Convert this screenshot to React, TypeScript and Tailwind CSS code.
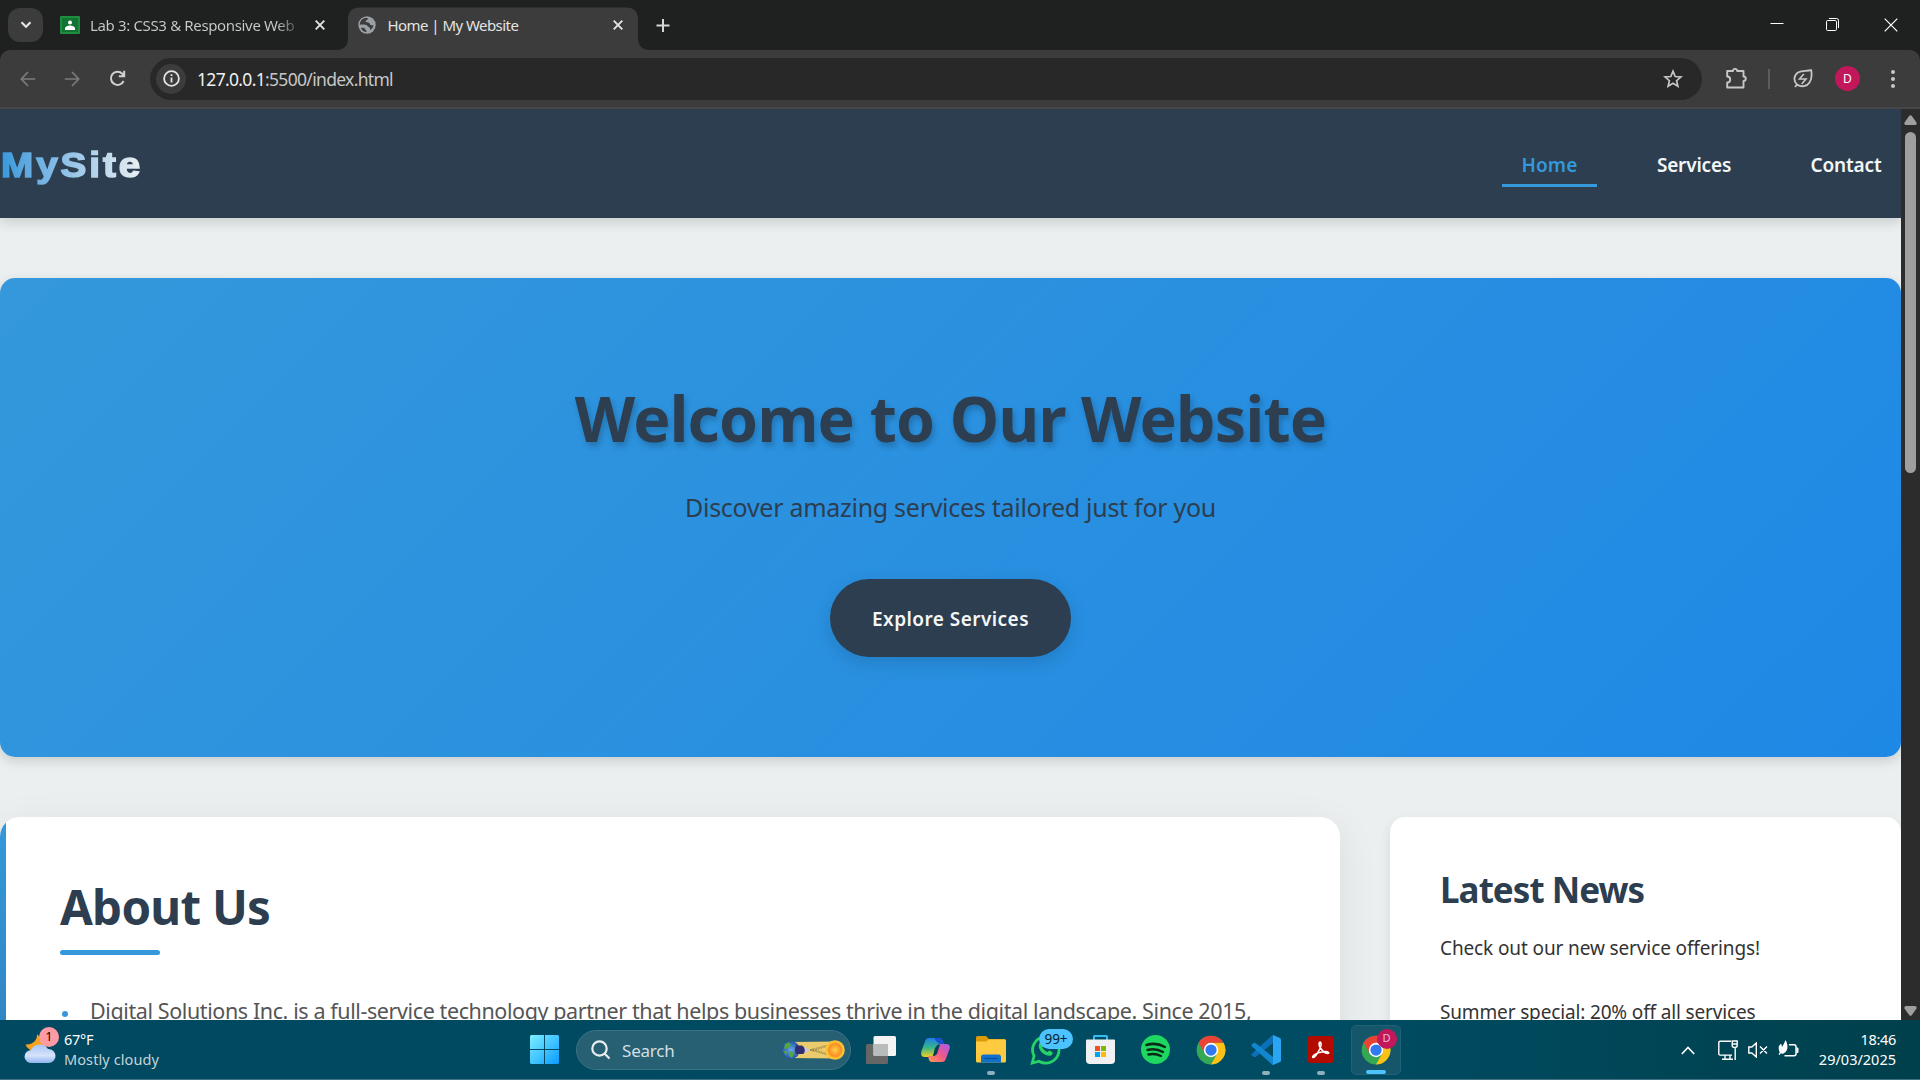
import React from 'react';

const Chrome = ({ size = 30 }: { size?: number }) => (
  <svg width={size} height={size} viewBox="0 0 48 48">
    <circle cx="24" cy="24" r="23" fill="#34a853" />
    <path d="M24 12.500H44 A23 23 0 0 1 24 47 L34 29.700 Z" fill="#fbc116" />
    <path d="M4.100 12.500 A23 23 0 0 1 43.900 12.500 H24 L14 18.300 L12.500 27 Z" fill="#ea4335" />
    <circle cx="24" cy="24" r="11.500" fill="#fff" />
    <circle cx="24" cy="24" r="9" fill="#3079f0" />
  </svg>
);

const Close = () => (
  <svg width="10" height="10" viewBox="0 0 10 10" stroke="#e3e3e3" strokeWidth="1.9" fill="none">
    <path d="M.7.7l8.600 8.600M9.300.7L.7 9.300" />
  </svg>
);

function TabStrip() {
  return (
    <div className="flex h-[50px] bg-[#1f2120] pl-2">
      <div className="mt-2 flex h-[34px] w-[35px] items-center justify-center rounded-xl bg-[#3c3c3c]">
        <svg width="12" height="8" viewBox="0 0 12 8" fill="none" stroke="#e3e3e3" strokeWidth="2.200"><path d="M1.500 1.300L6 5.800l4.500-4.500" /></svg>
      </div>
      <div className="ml-[17px] flex h-[50px] w-[267px] items-center">
        <svg width="20" height="18" viewBox="0 0 20 18">
          <rect width="20" height="18" rx="1" fill="#1e8e3e" />
          <rect x="2" y="2" width="16" height="14" fill="#137333" />
          <circle cx="10" cy="6.500" r="2" fill="#fff" />
          <path d="M5 14v-1.500c0-2 3-3 5-3s5 1 5 3V14z" fill="#fff" />
        </svg>
        <span className="ml-2.5 w-[207px] overflow-hidden bg-linear-to-r from-[#c9cac9] from-90% to-[#4a4b4a] bg-clip-text text-[15px] tracking-[-0.35px] whitespace-nowrap text-transparent">Lab 3: CSS3 &amp; Responsive Web</span>
        <span className="ml-[18px]"><Close /></span>
      </div>
      <div className="relative ml-[21px] flex h-[50px] w-[290px] items-center">
        <svg className="absolute top-0 -left-3" width="314" height="50" viewBox="0 0 314 50">
          <path d="M0 50Q12 50 12 38V19.500Q12 7.500 24 7.500H290Q302 7.500 302 19.500V38Q302 50 314 50Z" fill="#3c3c3c" />
        </svg>
        <svg className="relative ml-[10px]" width="18" height="18" viewBox="0 0 18 18">
          <circle cx="9" cy="9" r="8.700" fill="#9aa0a6" />
          <path d="M8.500 1.800c2 .3 1.500 2.200 0 2.400-1.500.2-1 2 .5 2 2 0 2.800 1 3 2 .3 1.300 2 .6 3.500 1.300-.5 2-2 3.800-3.500 4.500.5-2-.3-2.500-1.300-3C9 10.200 9.500 9 7.500 8.800 5 8.500 3 8.400 1.800 9 1.800 5 4.500 2 8.500 1.800zM3 12c1.500-.3 3.500-.2 4 1 .3 1 1.800 1 1.500 3C6 16 4 14.500 3 12z" fill="#3c3c3c" />
        </svg>
        <span className="relative ml-[11.500px] w-[225px] text-[15px] tracking-[-0.55px] whitespace-nowrap text-[#e3e3e3]">Home | My Website</span>
        <span className="relative"><Close /></span>
      </div>
      <svg className="mt-[19px] ml-[18px]" width="14" height="13" viewBox="0 0 14 13" stroke="#d6d6d6" strokeWidth="2"><path d="M7 0v13M.5 6.500h13" /></svg>
      <div className="ml-auto flex pr-[22px] text-white">
        <svg className="mt-[17px]" width="14" height="14" viewBox="0 0 14 14" stroke="#fff" strokeWidth="1"><path d="M.5 6.500h13" /></svg>
        <svg className="mt-[18px] ml-[42px]" width="14" height="14" viewBox="0 0 14 14" stroke="#fff" fill="none"><rect x=".5" y="2.500" width="10" height="10" rx="1.200" /><path d="M3 .5h7.500a2 2 0 0 1 2 2V10" /></svg>
        <svg className="mt-[18px] ml-[44px]" width="14" height="14" viewBox="0 0 14 14" stroke="#fff" strokeWidth="1.200"><path d="M.7.7l12.600 12.600M13.300.7L.7 13.300" /></svg>
      </div>
    </div>
  );
}

function Toolbar() {
  return (
    <div className="bg-[#1f2120]">
      <div className="flex h-[59px] items-center rounded-t-[10px] border-b-2 border-[#474747] bg-[#3c3c3c] pt-px pb-px pl-[20px]">
        <svg width="16" height="16" viewBox="0 0 16 16" fill="none" stroke="#7b7b7b" strokeWidth="1.700"><path d="M15.200 8H1.500M8 1L1.300 8 8 15" /></svg>
        <svg className="ml-[28px]" width="16" height="16" viewBox="0 0 16 16" fill="none" stroke="#7b7b7b" strokeWidth="1.700"><path d="M.8 8h13.700M8 1l6.700 7L8 15" /></svg>
        <svg className="ml-[29px]" width="17" height="17" viewBox="0 0 17 17" fill="none" stroke="#d0d0d0" strokeWidth="2"><path d="M14.600 11A6.600 6.600 0 1 1 13.300 3.700L15 5.500M15.200.8v5.400H9.800" /></svg>
        <div className="ml-[24px] flex h-[42px] w-[1552px] items-center rounded-full bg-[#282828] pl-1.5">
          <div className="flex size-[30px] items-center justify-center rounded-full bg-[#3c3c3c]">
            <svg width="17" height="17" viewBox="0 0 17 17" fill="none" stroke="#e3e3e3" strokeWidth="1.800"><circle cx="8.500" cy="8.500" r="7.400" /><path d="M8.500 7.500v5M8.500 4.200v1.900" /></svg>
          </div>
          <span className="ml-[11px] pt-px text-[17.500px] tracking-[-0.68px] text-[#c7c7c7]"><span className="text-[#f0f0f0]">127.0.0.1</span>:5500/index.html</span>
          <svg className="mr-[19px] ml-auto" width="20" height="20" viewBox="0 0 20 20" fill="none" stroke="#c7c7c7" strokeWidth="1.700"><path d="M10 2.200l2.200 5.300 5.700.5-4.300 3.700 1.300 5.600-4.900-3-4.900 3 1.300-5.600L2.100 8l5.700-.5z" /></svg>
        </div>
        <svg className="ml-[24px]" width="21" height="21" viewBox="0 0 21 21" fill="none" stroke="#c7c7c7" strokeWidth="1.900" strokeLinejoin="round"><path d="M1.200 3H7a2.100 2.100 0 0 1 4.200 0H17.500V8.500a2.200 2.200 0 0 1 0 4.500V19.500H1.200V14.500c4 0 4-6 0-6z" /></svg>
        <div className="ml-[21px] h-5 w-0.5 bg-[#5d5d5d]" />
        <svg className="ml-[23px]" width="20" height="20" viewBox="0 0 20 20" fill="none" stroke="#c7c7c7" strokeWidth="1.800"><path d="M2 18l2-2.500C-.5 11 1.500 5.500 5.500 3.300 9 1.300 13 2.300 18.200 1.200c.7 4 .5 9-1.700 12.300-2.500 4-8 5-12.500 2" /><path d="M10.800 5L6.500 10h6.500l-4.300 5" strokeWidth="1.600" /></svg>
        <div className="ml-[22px] flex size-[25px] items-center justify-center rounded-full bg-[#c2185b] text-[12px] text-white">D</div>
        <svg className="ml-[31px]" width="4" height="18" viewBox="0 0 4 18" fill="#c7c7c7"><circle cx="2" cy="2" r="2" /><circle cx="2" cy="9" r="2" /><circle cx="2" cy="16" r="2" /></svg>
      </div>
    </div>
  );
}

function Page() {
  return (
    <div className="h-[911px] w-[1901px] overflow-hidden bg-[#ebeff0]">
      <header className="relative flex h-[109px] items-center justify-between bg-[#2c3e50] shadow-[0_4px_12px_rgba(0,0,0,0.15)]">
        <div className="origin-left scale-x-110 bg-linear-to-r from-[#3498db] to-[#ecf0f1] bg-clip-text pt-[3px] pl-px font-['Liberation_Sans'] text-[35.200px] font-black tracking-[2.600px] text-transparent [-webkit-text-stroke:1.600px_transparent]">MySite</div>
        <nav className="flex gap-10 pt-0.5 text-[19px] font-semibold text-[#f4f6f7]">
          <div className="flex h-[45px] w-[95px] justify-center border-b-[3px] border-[#3498db] pt-[9px] tracking-[0.1px] text-[#3498db]">Home</div>
          <div className="flex w-[114px] justify-center pt-[9px] tracking-[-0.18px]">Services</div>
          <div className="flex w-[110px] justify-center pt-[9px] tracking-[-0.15px]">Contact</div>
        </nav>
      </header>
      <section className="mt-[60px] flex h-[479px] flex-col items-center rounded-[15px] bg-linear-135 from-[#3498db] to-[#1e88e5] pt-[98px] shadow-[0_4px_12px_rgba(0,0,0,0.15)]">
        <h1 className="text-[62.500px] leading-[84px] font-bold tracking-[-0.75px] text-[#2c3e50] [text-shadow:2px_4px_6px_rgba(0,0,0,0.22)]">Welcome to Our Website</h1>
        <p className="mt-[29px] text-[25px] leading-[36px] tracking-[-0.28px] text-[#2c3e50]">Discover amazing services tailored just for you</p>
        <div className="mt-[54px] flex h-[78px] w-[241px] items-center justify-center rounded-full bg-[#2c3e50] pt-0.5 text-[19px] font-semibold tracking-[0.450px] text-[#f4f6f7] shadow-[0_6px_18px_rgba(0,0,0,0.13)]">Explore Services</div>
      </section>
      <div className="mt-[60px] flex gap-[50px]">
        <article className="relative h-[500px] w-[1340px] rounded-[20px] bg-white shadow-[0_10px_40px_rgba(0,0,0,0.08)]">
          <div className="absolute inset-0 overflow-hidden rounded-[20px]"><div className="h-full w-1.5 bg-linear-to-b from-[#3498db] to-[#2c6ea6]" /></div>
          <div className="relative px-[60px] pt-[57px]">
            <h2 className="text-[47.500px] leading-[66px] font-bold tracking-[-0.75px] text-[#2c3e50]">About Us</h2>
            <div className="mt-[10px] h-[5px] w-[100px] rounded-[3px] bg-[#3498db]" />
            <div className="mt-[36px] flex items-center">
              <div className="mt-[5px] ml-0.5 size-1.5 shrink-0 rounded-full bg-[#3498db]" />
              <p className="ml-[22px] text-[21.500px] leading-[40px] tracking-[-0.400px] whitespace-nowrap text-[#555]">Digital Solutions Inc. is a full-service technology partner that helps businesses thrive in the digital landscape. Since 2015,</p>
            </div>
          </div>
        </article>
        <aside className="h-[500px] w-[511px] rounded-[15px] bg-white px-[50px] pt-[48px] shadow-[0_4px_12px_rgba(0,0,0,0.09)]">
          <h3 className="text-[35px] leading-[50px] font-bold tracking-[-0.950px] text-[#2c3e50]">Latest News</h3>
          <p className="mt-[17px] text-[19px] leading-[32px] tracking-[-0.120px] text-[#333]">Check out our new service offerings!</p>
          <p className="mt-[32px] text-[19px] leading-[32px] tracking-[-0.150px] text-[#333]">Summer special: 20% off all services</p>
        </aside>
      </div>
    </div>
  );
}

function Scrollbar() {
  return (
    <div className="flex h-[911px] w-[19px] flex-col items-center bg-[#2c2c2c] pt-1.5">
      <svg width="13" height="10" viewBox="0 0 13 10" fill="#9f9f9f"><path d="M5.300.8Q6.500-.5 7.700.8L12.500 7.500Q13 10 11 10H2Q0 10 .5 7.500z" /></svg>
      <div className="mt-[7px] h-[341px] w-[11px] rounded-full bg-[#9f9f9f]" />
      <svg className="mt-auto mb-1" width="13" height="10" viewBox="0 0 13 10" fill="#9f9f9f"><path d="M5.300 9.200Q6.500 10.500 7.700 9.200L12.500 2.500Q13 0 11 0H2Q0 0 .5 2.500z" /></svg>
    </div>
  );
}

const Dot = () => <div className="absolute bottom-[5px] left-1/2 h-1 w-2 -translate-x-1/2 rounded-full bg-[#8fb0bb]" />;

const Slot = ({ children, dot = false }: { children: React.ReactNode; dot?: boolean }) => (
  <div className="relative flex h-[60px] w-[55px] items-center justify-center">{children}{dot && <Dot />}</div>
);

function Taskbar() {
  return (
    <div className="flex h-[60px] border-b border-[#3f7182] bg-linear-to-r from-[#004960] via-[#004c63] via-70% to-[#00404c] text-white">
      <div className="flex w-[517px] pl-[24px]">
        <div className="relative mt-[7px] h-[38px] w-[36px]">
          <svg width="36" height="38" viewBox="0 0 36 38">
            <defs><linearGradient id="cl" x1="0" x2="0" y1="0" y2="1"><stop offset="0" stopColor="#a9c4f5" /><stop offset=".6" stopColor="#d5e3fb" /><stop offset="1" stopColor="#8fb2f0" /></linearGradient></defs>
            <path d="M13 7c3 4 5 5 9 5v12H8C5 22 2 20 1.500 17.500c7 .5 12-4 11.500-10.500z" fill="#f5a31c" />
            <path d="M8 36a7 6.500 0 0 1-1-13 9.500 9 0 0 1 17-1 7 7 0 0 1 1 14z" fill="url(#cl)" />
          </svg>
          <div className="absolute top-0 left-[15px] flex size-5 items-center justify-center rounded-full bg-[#ff99a4] text-[12px] text-black">1</div>
        </div>
        <div className="ml-[4px] pt-[9px] text-[14.500px] leading-[20px]">
          <div className="tracking-[-0.3px]">67°F</div>
          <div className="tracking-[0.1px] text-[#c4d4d9]">Mostly cloudy</div>
        </div>
      </div>
      <div className="flex items-center">
        <Slot>
          <svg width="29" height="29" viewBox="0 0 29 29">
            <defs><linearGradient id="win" x1="0" y1="0" x2="1" y2="1"><stop offset="0" stopColor="#7df0ff" /><stop offset="1" stopColor="#0a9bff" /></linearGradient></defs>
            <path d="M1 0h13v14H0V1zM15 0h13l1 1v13H15zM0 15h14v14H1l-1-1zM15 15h14v13l-1 1H15z" fill="url(#win)" />
          </svg>
        </Slot>
        <div className="ml-[4px] flex h-10 w-[275px] items-center rounded-full border border-[#3c7285] bg-[#276073] pr-[5px] pl-[14px]">
          <svg width="20" height="20" viewBox="0 0 20 20" fill="none" stroke="#e8eef0" strokeWidth="2.200"><circle cx="8.500" cy="8.500" r="7.200" /><path d="M13.500 13.500l5 5" /></svg>
          <span className="ml-[11px] pt-0.5 text-[17px] tracking-[-0.2px] text-[#d3dfe3]">Search</span>
          <svg className="ml-auto" width="63" height="20" viewBox="0 0 63 20">
            <defs>
              <radialGradient id="sun"><stop offset="0" stopColor="#ffd24a" /><stop offset=".65" stopColor="#f98d23" /><stop offset=".8" stopColor="#ffc02e" /><stop offset="1" stopColor="#f5c542" /></radialGradient>
              <radialGradient id="earth"><stop offset="0" stopColor="#6aa8e8" /><stop offset="1" stopColor="#1d56a8" /></radialGradient>
            </defs>
            <path d="M9 18L54 18.500V1.500L9 2z" fill="#ebcb6c" />
            <circle cx="9" cy="10" r="9" fill="url(#earth)" />
            <path d="M3 4l4-2 2 3-3 3-4 1zM8 11l4 2-2 5-3-2zM1 10l4 2-1 4z" fill="#57a639" />
            <path d="M14 5.500h6l6 4.500-5 4H14q-2-4 0-8.500z" fill="#302e6e" />
            <path d="M21 6l7 4-6 3.500q2-4-1-7.500z" fill="#c9c6d8" />
            <path d="M28 10L46 5M28 10l18 5M30 9L46 14M30 11L46 6" stroke="#6a5a38" strokeWidth=".6" strokeDasharray="2 1" />
            <circle cx="53" cy="10" r="9.800" fill="url(#sun)" />
          </svg>
        </div>
        <div className="ml-[2px] flex">
          <Slot>
            <svg width="30" height="28" viewBox="0 0 30 28"><rect y="8" width="22" height="20" rx="1.500" fill="#666" /><rect x="7.500" y="0" width="22.500" height="20" rx="1.500" fill="#f3f3f3" /><path d="M7.500 8H22v12H9q-1.500 0-1.500-1.500z" fill="#b9bcbc" /></svg>
          </Slot>
          <Slot>
            <svg width="29" height="26" viewBox="0 0 29 26">
              <defs>
                <linearGradient id="c1" x1="0" y1="0" x2="0" y2="1"><stop offset="0" stopColor="#1f7fe8" /><stop offset=".5" stopColor="#35b58a" /><stop offset="1" stopColor="#f2cf1d" /></linearGradient>
                <linearGradient id="c2" x1="1" y1="0" x2="0" y2="1"><stop offset="0" stopColor="#a25cf0" /><stop offset=".5" stopColor="#f0588c" /><stop offset="1" stopColor="#ff9a4a" /></linearGradient>
              </defs>
              <path d="M8 1h10q3 0 4 4l1 3h-5q-2 0-3 3l-2 6q-1 3-4 3H4q-5 0-3.500-6L4 4.500Q5 1 8 1z" fill="url(#c1)" />
              <path d="M21 25H11q-3 0-3.500-4L7 19h3q3 0 4-3l2-6q1-3 4-3h5q5 0 3.500 5L25 21.500Q24 25 21 25z" fill="url(#c2)" />
              <path d="M13 1h5q3 0 4 4l1 2h-4q-3-1-6-6z" fill="#1b4fd0" />
              <path d="M14 11l3-3.500h2l-3 9.500-2.500 2H12z" fill="#063f55" />
            </svg>
          </Slot>
          <Slot dot>
            <svg width="30" height="27" viewBox="0 0 30 27"><path d="M0 1.500Q0 0 1.500 0H10l3 3h15.500Q30 3 30 5v6H0z" fill="#dc9a09" /><path d="M0 5.500h10l3-2H28.500Q30 3.500 30 5v20q0 1.500-1.500 1.500h-27Q0 26.500 0 25z" fill="#fecb40" /><path d="M5 26.500V21q0-2.500 2.500-2.500h15Q25 18.500 25 21v5.500z" fill="#0f71cc" /><path d="M8.500 22.500h13" stroke="#064a90" /></svg>
          </Slot>
          <Slot>
            <svg width="31" height="31" viewBox="0 0 31 31"><path d="M2.200 29l1.900-7A13.200 13.200 0 1 1 9 27.200z" fill="none" stroke="#25d366" strokeWidth="2.800" /><path d="M10 8.500c1-1 2.200-.6 2.600.4l.9 2.200c.3.800-1 1.700-1.200 2.200.8 2 3 4 5.200 4.800.6-.2 1.400-1.800 2.100-1.500l2.600 1.300c.8.5.4 2.200-.5 3-3.500 3-12.700-2.500-13-8.700 0-1.400.5-2.900 1.300-3.700z" fill="#25d366" /></svg>
            <div className="absolute top-[9px] left-[21px] flex h-5 w-[34px] items-center justify-center rounded-full bg-[#4cc2ff] pt-0.5 text-[13.500px] text-[#06222e]">99+</div>
          </Slot>
          <Slot>
            <svg width="29" height="29" viewBox="0 0 29 29"><path d="M8 6V1.500Q8 1 8.500 1h12q.5 0 .5.500V6" fill="none" stroke="#35bdf2" strokeWidth="2" /><path d="M0 5.500Q0 4.500 1 4.500h27q1 0 1 1V25q0 4-4 4H4q-4 0-4-4z" fill="#f1f1f3" /><path d="M9 11h5v5H9z" fill="#f25022" /><path d="M15 11h5v5h-5z" fill="#7fba00" /><path d="M9 17h5v5H9z" fill="#00a4ef" /><path d="M15 17h5v5h-5z" fill="#ffb900" /></svg>
          </Slot>
          <Slot>
            <svg width="29" height="29" viewBox="0 0 29 29"><circle cx="14.500" cy="14.500" r="14.500" fill="#1ed760" /><path d="M5.500 10q9.500-3 18.500 2M6.500 15q8-2.300 15.500 2M7.500 19.500q6.500-1.700 12.500 1.500" fill="none" stroke="#0a2a18" strokeWidth="2.500" strokeLinecap="round" /></svg>
          </Slot>
          <Slot><Chrome /></Slot>
          <Slot dot>
            <svg width="30" height="30" viewBox="0 0 30 30"><path d="M22 0l7 3q1 .5 1 1.500v21q0 1-1 1.500l-7 3z" fill="#2aa5f2" /><path d="M22 8L4.500 22 3 22.200.8 20.500q-.8-.8 0-1.800L21 .5q.6-.5 1-.5z" fill="#0c6fb9" /><path d="M22 22L4.500 8 3 7.800.8 9.500q-.8.8 0 1.800L21 29.500q.6.500 1 .5z" fill="#1187d0" /></svg>
          </Slot>
          <Slot dot>
            <div className="flex size-[27px] items-center justify-center rounded-[4px] bg-[#b30b00]">
              <svg width="19" height="18" viewBox="0 0 19 18" fill="none" stroke="#fff" strokeWidth="1.600"><path d="M8.500 1.500C7 4 10 9.500 14.500 12c5 1.500 4-2-2-1.300C9 11 5.500 12 3 14c-3 3-.5 3.500 2 .2C8 10 10.500 5 10 2.500q-.5-2-1.500-1z" /></svg>
            </div>
          </Slot>
          <div className="relative mt-[5px] ml-[2.500px] flex h-[50px] w-[50px] items-center justify-center rounded-[5px] border border-[#1f6175] bg-[#15566b]">
            <Chrome />
            <div className="absolute top-[3px] left-[25px] flex size-5 items-center justify-center rounded-full bg-[#c2185b] text-[11px] text-[#f0b8cf]">D</div>
            <div className="absolute bottom-0 left-[14px] h-1 w-5 rounded-full bg-[#4cc2ff]" />
          </div>
        </div>
      </div>
      <div className="ml-auto flex pr-[24px]">
        <svg className="mt-[26px]" width="14" height="9" viewBox="0 0 14 9" fill="none" stroke="#fff" strokeWidth="1.600"><path d="M.8 8L7 1.500 13.200 8" /></svg>
        <svg className="mt-[20px] ml-[23px]" width="21" height="21" viewBox="0 0 21 21" fill="none" stroke="#fff" strokeWidth="1.400"><path d="M13 1.200H2.200Q.8 1.200.8 2.500v11.300q0 1.300 1.400 1.300H14M4 19.300h11M7 15v4M12 15v4M17.200 7v13M14.200 1h5v4.500q0 2-2.500 2t-2.500-2zM14.200 4h5" /></svg>
        <svg className="mt-[22px] ml-[9px]" width="20" height="16" viewBox="0 0 20 16" fill="none" stroke="#fff" strokeWidth="1.400"><path d="M.8 5v6h3L8.300 15V1L3.800 5zM12 4.500l7 7M19 4.500l-7 7" /></svg>
        <svg className="mt-[20px] ml-[10px]" width="21" height="18" viewBox="0 0 21 18"><path d="M11 4.700h5q2 0 2 2v7q0 2-2 2H6.500" fill="none" stroke="#fff" strokeWidth="1.500" /><path d="M18.500 7.500h1q1 0 1 1v3.500q0 1-1 1h-1zM7.500 0c2.500 4 3.500 11-2 13.500q-1.500.5-2.500-.3L1.500 15 .5 14l1.300-1.500C-.5 8 1 4 3.500 4q0 2 .5 3 2-3 3.500-7z" fill="#fff" /></svg>
        <div className="ml-[19px] w-[78px] pt-[9px] text-right text-[14.500px] leading-[20px] whitespace-nowrap">
          <div className="tracking-[-0.3px]">18:46</div>
          <div>29/03/2025</div>
        </div>
      </div>
    </div>
  );
}

export default function App() {
  return (
    <div className="h-[1080px] w-[1920px] overflow-hidden font-['Noto_Sans',sans-serif]">
      <TabStrip />
      <Toolbar />
      <div className="flex">
        <Page />
        <Scrollbar />
      </div>
      <Taskbar />
    </div>
  );
}
